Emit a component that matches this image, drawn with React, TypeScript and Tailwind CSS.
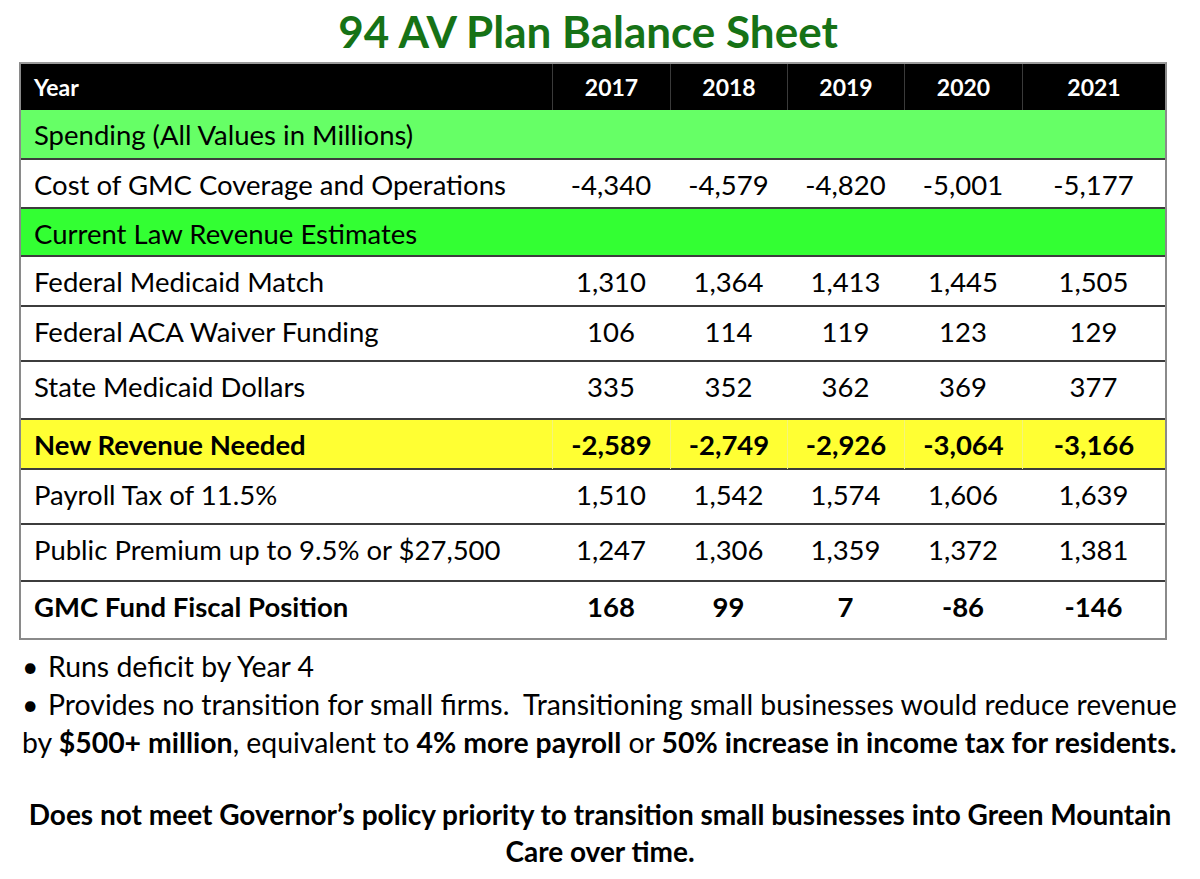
import React from "react";

type Row = {
  label: string;
  values?: string[];
  h: string;
  bg: string;
  bold?: boolean;
  vlines?: boolean;
};

const rows: Row[] = [
  { label: "Spending (All Values in Millions)", h: "h-[48px]", bg: "bg-[#66ff66]" },
  { label: "Cost of GMC Coverage and Operations", values: ["-4,340", "-4,579", "-4,820", "-5,001", "-5,177"], h: "h-[49px]", bg: "bg-white" },
  { label: "Current Law Revenue Estimates", h: "h-[48px]", bg: "bg-[#33ff33]" },
  { label: "Federal Medicaid Match", values: ["1,310", "1,364", "1,413", "1,445", "1,505"], h: "h-[50px]", bg: "bg-white" },
  { label: "Federal ACA Waiver Funding", values: ["106", "114", "119", "123", "129"], h: "h-[55px]", bg: "bg-white" },
  { label: "State Medicaid Dollars", values: ["335", "352", "362", "369", "377"], h: "h-[58px]", bg: "bg-white" },
  { label: "New Revenue Needed", values: ["-2,589", "-2,749", "-2,926", "-3,064", "-3,166"], h: "h-[50px]", bg: "bg-[#ffff33]", bold: true, vlines: true },
  { label: "Payroll Tax of 11.5%", values: ["1,510", "1,542", "1,574", "1,606", "1,639"], h: "h-[55px]", bg: "bg-white" },
  { label: "Public Premium up to 9.5% or $27,500", values: ["1,247", "1,306", "1,359", "1,372", "1,381"], h: "h-[57px]", bg: "bg-white" },
  { label: "GMC Fund Fiscal Position", values: ["168", "99", "7", "-86", "-146"], h: "h-[58px]", bg: "bg-white", bold: true },
];

const cols = "grid grid-cols-[531px_118px_117px_117px_118px_1fr]";

export default function App() {
  return (
    <div className="w-[1200px] h-[879px] bg-white text-black font-['Lato','Open_Sans',sans-serif] overflow-hidden">
      <h1 className="text-center pt-[6px] h-[62px] text-[44px] leading-[50px] font-bold text-[#167216] pr-[24px]">
        94 AV Plan Balance Sheet
      </h1>
      <div className="ml-[19px] w-[1148px] border-2 border-[#8a8a8a] border-t-[#9a9a9a]">
        <div className={`${cols} h-[46px] bg-black text-white font-bold text-[23px] leading-[46px]`}>
          <div className="pl-[13px]">Year</div>
          {["2017", "2018", "2019", "2020", "2021"].map((y) => (
            <div key={y} className="text-center border-l border-[#3a3a3a]">
              {y}
            </div>
          ))}
        </div>
        {rows.map((r, i) => (
          <div
            key={i}
            className={`${cols} ${r.h} ${r.bg} ${i > 0 ? "border-t-2 border-[#3c3c3c]" : ""} text-[27.5px] leading-[49px] ${r.bold ? "font-bold" : ""}`}
          >
            <div className="pl-[13px] whitespace-nowrap">{r.label}</div>
            {r.values
              ? r.values.map((v, j) => (
                  <div
                    key={j}
                    className={`text-center ${r.vlines ? "border-l border-[#f4f47a]" : ""}`}
                  >
                    {v}
                  </div>
                ))
              : null}
          </div>
        ))}
      </div>
      <div className="pl-[22px] pt-[7px] text-[28.4px] leading-[38px] whitespace-nowrap">
        <div className="flex">
          <span className="w-[26px]">•</span>
          <span>Runs deficit by Year 4</span>
        </div>
        <div className="flex">
          <span className="w-[26px]">•</span>
          <span>Provides no transition for small firms.&nbsp; Transitioning small businesses would reduce revenue</span>
        </div>
        <div>
          by <b>$500+ million</b>, equivalent to <b>4% more payroll</b> or <b>50% increase in income tax for residents.</b>
        </div>
      </div>
      <div className="mt-[35px] text-center font-bold text-[28px] leading-[37px] px-[4px] whitespace-nowrap">
        Does not meet Governor’s policy priority to transition small businesses into Green Mountain
        <br />
        Care over time.
      </div>
    </div>
  );
}
